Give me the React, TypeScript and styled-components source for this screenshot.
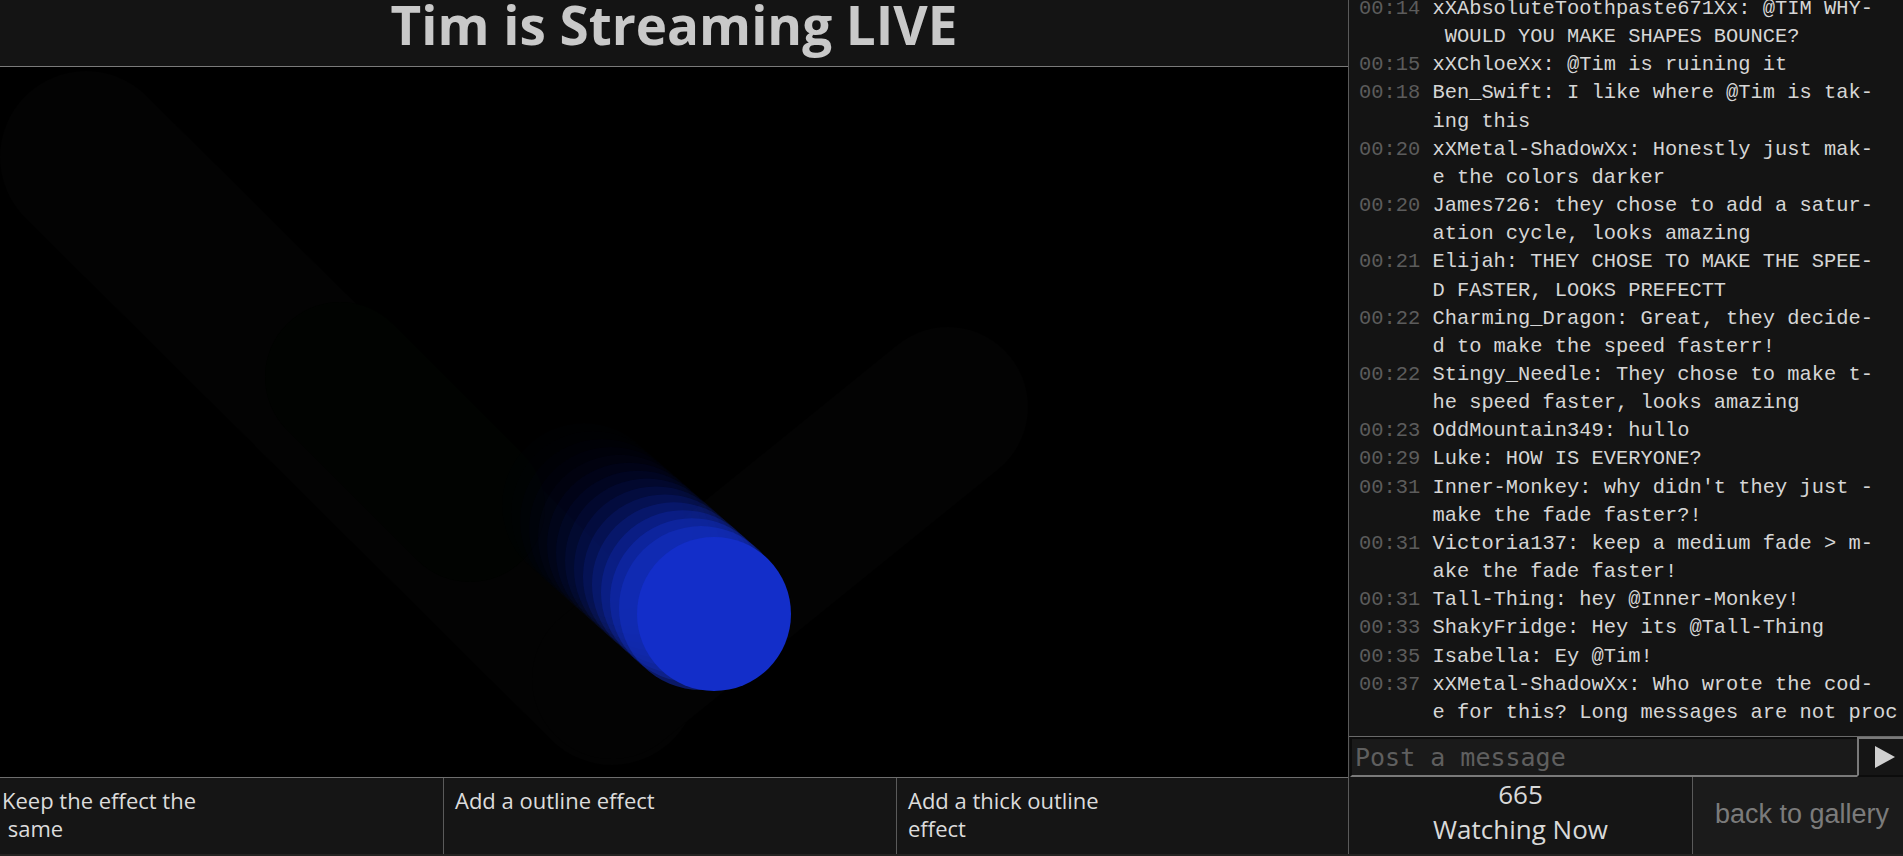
import styled, { createGlobalStyle } from "styled-components";

type Message = {
  time: string;
  lines: string[];
};

const messages: Message[] = [
  { time: "00:14", lines: ["xXAbsoluteToothpaste671Xx: @TIM WHY-", " WOULD YOU MAKE SHAPES BOUNCE?"] },
  { time: "00:15", lines: ["xXChloeXx: @Tim is ruining it"] },
  { time: "00:18", lines: ["Ben_Swift: I like where @Tim is tak-", "ing this"] },
  { time: "00:20", lines: ["xXMetal-ShadowXx: Honestly just mak-", "e the colors darker"] },
  { time: "00:20", lines: ["James726: they chose to add a satur-", "ation cycle, looks amazing"] },
  { time: "00:21", lines: ["Elijah: THEY CHOSE TO MAKE THE SPEE-", "D FASTER, LOOKS PREFECTT"] },
  { time: "00:22", lines: ["Charming_Dragon: Great, they decide-", "d to make the speed fasterr!"] },
  { time: "00:22", lines: ["Stingy_Needle: They chose to make t-", "he speed faster, looks amazing"] },
  { time: "00:23", lines: ["OddMountain349: hullo"] },
  { time: "00:29", lines: ["Luke: HOW IS EVERYONE?"] },
  { time: "00:31", lines: ["Inner-Monkey: why didn't they just -", "make the fade faster?!"] },
  { time: "00:31", lines: ["Victoria137: keep a medium fade > m-", "ake the fade faster!"] },
  { time: "00:31", lines: ["Tall-Thing: hey @Inner-Monkey!"] },
  { time: "00:33", lines: ["ShakyFridge: Hey its @Tall-Thing"] },
  { time: "00:35", lines: ["Isabella: Ey @Tim!"] },
  { time: "00:37", lines: ["xXMetal-ShadowXx: Who wrote the cod-", "e for this? Long messages are not proc"] },
];

const options = [
  { text: "Keep the effect the\n same", first: true },
  { text: "Add a outline effect", first: false },
  { text: "Add a thick outline\neffect", first: false },
];

// ball + trail in stage coordinates
const ball = { x: 710, y: 549, r: 82 };
const trailDir = { x: -0.75, y: -0.66 };
const trail = Array.from({ length: 14 }, (_, i) => 14 - i);

function Stream() {
  return (
    <StageSvg viewBox="0 0 1348 710" preserveAspectRatio="none">
      <line x1={86} y1={90} x2={612} y2={612} stroke="#030303" strokeWidth={172} strokeLinecap="round" />
      <line x1={612} y1={612} x2={948} y2={340} stroke="#030303" strokeWidth={160} strokeLinecap="round" />
      <line x1={340} y1={310} x2={470} y2={440} stroke="#010301" strokeWidth={150} strokeLinecap="round" />
      {trail.map((i) => (
        <circle
          key={i}
          cx={ball.x + trailDir.x * i * 12}
          cy={ball.y + trailDir.y * i * 12}
          r={ball.r}
          fill="#1430c8"
          opacity={0.5 * Math.pow(0.74, i - 1)}
        />
      ))}
      <circle cx={ball.x + 4} cy={ball.y - 2} r={ball.r - 5} fill="#132ec9" />
    </StageSvg>
  );
}

function Chat() {
  return (
    <ChatColumn>
      <MessageList>
        {messages.map((m, idx) => (
          <MessageRow key={idx}>
            <Time>{m.time} </Time>
            <Body>
              {m.lines.map((line, j) => (
                <Line key={j}>{line}</Line>
              ))}
            </Body>
          </MessageRow>
        ))}
      </MessageList>
      <InputRow>
        <MessageInput placeholder="Post a message" />
        <SendBtn aria-label="send">
          <svg width="20" height="22" viewBox="0 0 20 22">
            <polygon points="0,0 20,11 0,22" fill="#d0d0d0" />
          </svg>
        </SendBtn>
      </InputRow>
      <Footer>
        <Watching>
          <span>665</span>
          <span>Watching Now</span>
        </Watching>
        <GalleryLink>back to gallery</GalleryLink>
      </Footer>
    </ChatColumn>
  );
}

export default function App() {
  return (
    <>
      <GlobalStyle />
      <Page>
        <MainColumn>
          <Header>
            <Title>Tim is Streaming LIVE</Title>
          </Header>
          <Stage>
            <Stream />
          </Stage>
          <OptionBar>
            {options.map((o) => (
              <OptionCell key={o.text} $first={o.first}>
                <OptionText>{o.text}</OptionText>
              </OptionCell>
            ))}
          </OptionBar>
        </MainColumn>
        <Chat />
      </Page>
    </>
  );
}

const GlobalStyle = createGlobalStyle`
  html, body {
    margin: 0;
    padding: 0;
    background: #242221;
    overflow: hidden;
  }
  * {
    box-sizing: border-box;
  }
`;

const Page = styled.div`
  display: grid;
  grid-template-columns: 1348px 1fr;
  height: 854px;
  background: #141414;
`;

const MainColumn = styled.div`
  display: flex;
  flex-direction: column;
  min-width: 0;
`;

const Header = styled.header`
  height: 67px;
  flex: none;
  display: flex;
  justify-content: center;
  align-items: flex-start;
  background: #141414;
  border-bottom: 1px solid #7a7a7a;
`;

const Title = styled.h1`
  margin: 2px 0 0;
  font-family: "Open Sans", "Noto Sans", sans-serif;
  font-weight: 700;
  font-size: 53px;
  line-height: 46px;
  color: #c9c9c9;
`;

const Stage = styled.div`
  flex: 1;
  background: #000;
  overflow: hidden;
`;

const StageSvg = styled.svg`
  display: block;
  width: 100%;
  height: 100%;
`;

const OptionBar = styled.div`
  height: 77px;
  flex: none;
  display: grid;
  grid-template-columns: 443px 453px 1fr;
  border-top: 1px solid #6e6e6e;
  background: #151515;
`;

const OptionCell = styled.div<{ $first: boolean }>`
  padding: 8px 0 0 ${(p) => (p.$first ? "2px" : "11px")};
  border-left: ${(p) => (p.$first ? "none" : "1px solid #5a5a5a")};
`;

const OptionText = styled.span`
  white-space: pre;
  font-family: "Open Sans", "Noto Sans", sans-serif;
  font-size: 22px;
  line-height: 28px;
  color: #dcdcdc;
`;

const ChatColumn = styled.aside`
  display: flex;
  flex-direction: column;
  border-left: 1px solid #5a5a5a;
  background: #141414;
  min-width: 0;
`;

const MessageList = styled.div`
  height: 737px;
  flex: none;
  display: flex;
  flex-direction: column;
  justify-content: flex-end;
  padding: 0 0 9px 10px;
  border-bottom: 1px solid #6a6a6a;
  overflow: hidden;
  font-family: "Liberation Mono", "DejaVu Sans Mono", monospace;
  font-size: 20.4px;
  line-height: 28.16px;
`;

const MessageRow = styled.div`
  display: flex;
  flex: none;
`;

const Time = styled.span`
  white-space: pre;
  color: #5c5c5c;
`;

const Body = styled.div`
  display: flex;
  flex-direction: column;
  color: #d6d6d6;
`;

const Line = styled.span`
  white-space: pre;
`;

const InputRow = styled.div`
  height: 40px;
  flex: none;
  display: flex;
`;

const MessageInput = styled.input`
  flex: 1;
  min-width: 0;
  margin-left: 1px;
  height: 40px;
  padding: 0 0 0 3px;
  background: #1a1a1a;
  border: none;
  border-top: 2px solid #0c0c0c;
  border-left: 2px solid #0c0c0c;
  border-bottom: 2px solid #7a7a7a;
  color: #dddddd;
  font-family: "DejaVu Sans Mono", "Liberation Mono", monospace;
  font-size: 25px;
  outline: none;

  &::placeholder {
    color: #5f5f5f;
  }
`;

const SendBtn = styled.button`
  width: 46px;
  height: 40px;
  flex: none;
  display: flex;
  align-items: center;
  justify-content: flex-end;
  padding: 0 8px 0 0;
  background: #151515;
  border: none;
  border-top: 2px solid #7a7a7a;
  border-left: 2px solid #7a7a7a;
  border-bottom: 2px solid #0c0c0c;
  cursor: pointer;
`;

const Footer = styled.div`
  flex: 1;
  display: grid;
  grid-template-columns: 343px 1fr;
`;

const Watching = styled.div`
  display: flex;
  flex-direction: column;
  align-items: center;
  font-family: "Open Sans", "Noto Sans", sans-serif;
  font-size: 26px;
  line-height: 35px;
  color: #d9d9d9;
  background: #151515;
`;

const GalleryLink = styled.a`
  display: flex;
  align-items: center;
  justify-content: center;
  padding: 0 0 3px 8px;
  border-left: 1px solid #5a5a5a;
  background: #1b1b1b;
  font-family: "Liberation Sans", Arial, sans-serif;
  font-size: 27px;
  color: #7b7b7b;
  cursor: pointer;
`;
